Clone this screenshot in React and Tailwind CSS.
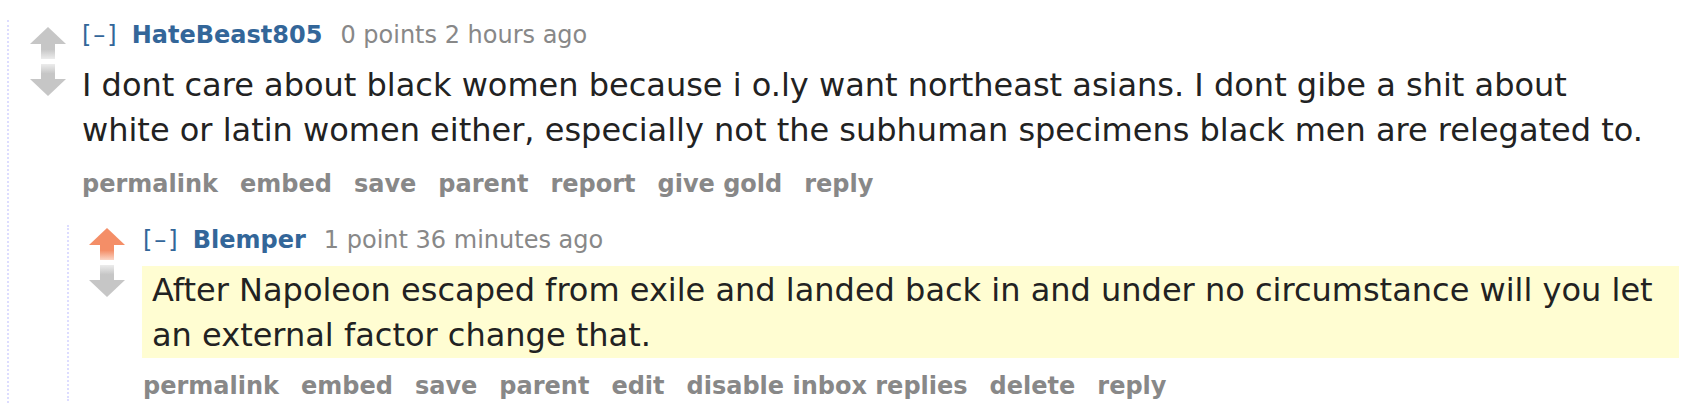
import React from "react";

const FONT = { fontFamily: '"DejaVu Sans", Verdana, sans-serif' };

function Arrow({ dir, color, fade, id }) {
  const up = dir === "up";
  return (
    <svg width="36" height="32" viewBox="0 0 36 32" className="block">
      <defs>
        <linearGradient id={id} x1="0" y1="0" x2="0" y2="1">
          {up ? (
            <>
              <stop offset="0%" stopColor={color} />
              <stop offset="40%" stopColor={color} />
              <stop offset="100%" stopColor={fade} />
            </>
          ) : (
            <>
              <stop offset="0%" stopColor={fade} />
              <stop offset="60%" stopColor={color} />
              <stop offset="100%" stopColor={color} />
            </>
          )}
        </linearGradient>
      </defs>
      {up ? (
        <>
          <polygon points="18,0 36,17 0,17" fill={color} />
          <rect x="11" y="16" width="14" height="16" fill={`url(#${id})`} />
        </>
      ) : (
        <>
          <rect x="11" y="0" width="14" height="16" fill={`url(#${id})`} />
          <polygon points="0,15 36,15 18,32" fill={color} />
        </>
      )}
    </svg>
  );
}

function Tagline({ author, meta }) {
  return (
    <div className="flex items-baseline text-[24px] leading-[30px] whitespace-nowrap">
      <span className="text-[#369] mr-[13px] tracking-[2px]">[–]</span>
      <span className="text-[#369] font-bold">{author}</span>
      <span className="text-[#888] ml-[18px]">{meta}</span>
    </div>
  );
}

function Buttons({ items }) {
  return (
    <div className="flex gap-x-[22px] text-[24px] leading-[30px] font-bold text-[#888] whitespace-nowrap">
      {items.map((b) => (
        <span key={b}>{b}</span>
      ))}
    </div>
  );
}

export default function App() {
  return (
    <div style={FONT} className="w-[1682px] h-[416px] bg-white overflow-hidden pt-[20px] pl-[7px]">
      <div className="border-l-2 border-dotted border-[#ddf] pb-[2px]">
        {/* Comment 1 */}
        <div className="flex">
          <div className="ml-[21px] mt-[7px] w-[36px] flex flex-col gap-[5px] shrink-0">
            <Arrow dir="up" color="#c6c6c6" fade="#ececec" id="u1" />
            <Arrow dir="down" color="#c6c6c6" fade="#ececec" id="d1" />
          </div>
          <div className="ml-[16px] flex-1 pr-[3px]">
            <Tagline author="HateBeast805" meta="0 points 2 hours ago" />
            <p className="mt-[13px] w-[1565px] text-[32px] leading-[45px] text-[#222]">
              I dont care about black women because i o.ly want northeast asians. I dont gibe a shit about white or latin women either, especially not the subhuman specimens black men are relegated to.
            </p>
            <div className="mt-[16px]">
              <Buttons items={["permalink", "embed", "save", "parent", "report", "give gold", "reply"]} />
            </div>
          </div>
        </div>

        {/* Child */}
        <div className="ml-[58px] mt-[26px] border-l-2 border-dotted border-[#ddf]">
          <div className="flex">
            <div className="ml-[20px] mt-[3px] w-[36px] flex flex-col gap-[5px] shrink-0">
              <Arrow dir="up" color="#f48e67" fade="#fbd6c6" id="u2" />
              <Arrow dir="down" color="#c6c6c6" fade="#ececec" id="d2" />
            </div>
            <div className="ml-[18px] flex-1 pr-[3px]">
              <Tagline author="Blemper" meta="1 point 36 minutes ago" />
              <div className="mt-[11px] -ml-[1px] bg-[#fffdd2] pt-[2px] pl-[10px] pr-[8px]">
                <p className="text-[32px] leading-[45px] text-[#222]">
                  After Napoleon escaped from exile and landed back in and under no circumstance will you let an external factor change that.
                </p>
              </div>
              <div className="mt-[13px]">
                <Buttons items={["permalink", "embed", "save", "parent", "edit", "disable inbox replies", "delete", "reply"]} />
              </div>
            </div>
          </div>
        </div>
      </div>
    </div>
  );
}
